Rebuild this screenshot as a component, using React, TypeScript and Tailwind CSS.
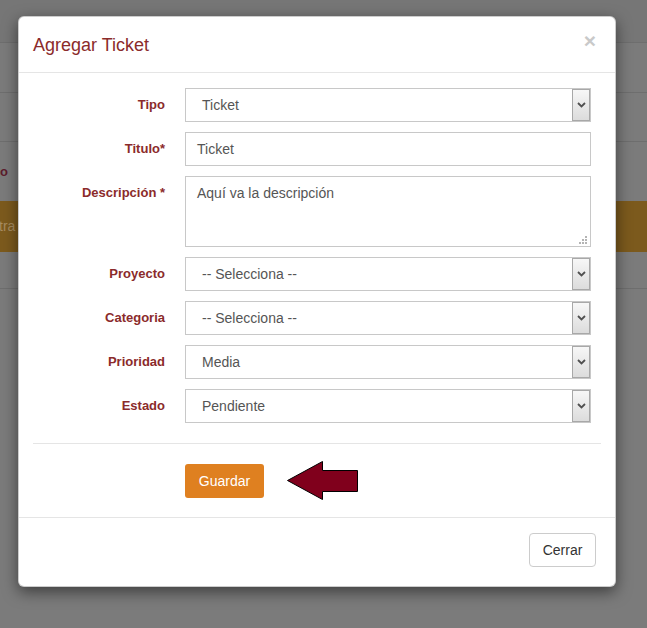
import React from "react";

const labelCls =
  "w-[132px] h-[34px] shrink-0 flex items-center justify-end text-[13px] font-bold text-[#8b2b2b]";

function Chevron() {
  return (
    <svg width="9" height="6" viewBox="0 0 9 6">
      <path d="M1 1 L4.5 4.5 L8 1" fill="none" stroke="#505050" strokeWidth="1.8" />
    </svg>
  );
}

function SelectBox({ value }: { value: string }) {
  return (
    <div className="w-[406px] h-[34px] border border-[#c8c8c8] bg-white flex items-stretch">
      <div className="flex-1 flex items-center pl-[16px] text-[14px] text-[#555]">{value}</div>
      <div className="w-[18px] border border-[#a8a8a8] bg-linear-to-b from-[#f7f7f7] to-[#dcdcdc] flex items-center justify-center">
        <Chevron />
      </div>
    </div>
  );
}

function Row({ label, children, top }: { label: string; children: React.ReactNode; top?: boolean }) {
  return (
    <div className={"flex gap-[20px] " + (top ? "items-start" : "items-center")}>
      <div className={labelCls}>{label}</div>
      {children}
    </div>
  );
}

export default function App() {
  return (
    <div className="relative w-[647px] h-[628px] overflow-hidden bg-[#7b7b7b] font-['Liberation_Sans',Arial,sans-serif]">
      {/* dimmed page behind the modal */}
      <div className="flex flex-col">
        <div className="h-[43px] border-b border-[#6e6e6e] bg-[#767676]" />
        <div className="h-[50px] border-b border-[#6e6e6e]" />
        <div className="h-[49px] border-b border-[#6e6e6e]" />
        <div className="h-[59px] flex items-center">
          <span className="text-[13px] font-bold leading-none text-[#5c1c2c]">o</span>
        </div>
        <div className="h-[51px] bg-[#7c5a1d] flex items-center">
          <span className="-ml-[1px] text-[14px] text-[#a78c60]">tra</span>
        </div>
        <div className="h-[37px] border-b border-[#6e6e6e]" />
      </div>

      {/* modal */}
      <div className="absolute left-[18px] top-[16px] w-[598px] rounded-[6px] bg-white border border-black/20 shadow-[0_5px_15px_rgba(0,0,0,0.5)]">
        <div className="h-[56px] border-b border-[#e5e5e5] flex items-center justify-between pl-[14px] pr-[19px]">
          <h4 className="text-[18px] text-[#8b2b2b] leading-none">Agregar Ticket</h4>
          <span className="-mt-[9px] text-[21px] font-bold leading-none text-[#c9c9c9]">×</span>
        </div>

        <div className="px-[14px] pt-[15px] pb-[19px]">
          <div className="flex flex-col gap-[10px]">
            <Row label="Tipo">
              <SelectBox value="Ticket" />
            </Row>
            <Row label="Titulo*">
              <div className="w-[406px] h-[34px] border border-[#c8c8c8] flex items-center pl-[11px] text-[14px] text-[#555]">
                Ticket
              </div>
            </Row>
            <Row label="Descripción *" top>
              <div className="relative w-[406px] h-[71px] border border-[#c8c8c8] pl-[11px] pt-[6px] text-[14px] leading-[20px] text-[#555]">
                Aquí va la descripción
                <svg className="absolute right-[3px] bottom-[2px]" width="9" height="9" viewBox="0 0 9 9">
                  <rect x="7" y="1" width="2" height="2" fill="#b4b4b4" />
                  <rect x="4" y="4" width="2" height="2" fill="#b4b4b4" />
                  <rect x="7" y="4" width="2" height="2" fill="#b4b4b4" />
                  <rect x="1" y="7" width="2" height="2" fill="#b4b4b4" />
                  <rect x="4" y="7" width="2" height="2" fill="#b4b4b4" />
                  <rect x="7" y="7" width="2" height="2" fill="#b4b4b4" />
                </svg>
              </div>
            </Row>
            <Row label="Proyecto">
              <SelectBox value="-- Selecciona --" />
            </Row>
            <Row label="Categoria">
              <SelectBox value="-- Selecciona --" />
            </Row>
            <Row label="Prioridad">
              <SelectBox value="Media" />
            </Row>
            <Row label="Estado">
              <SelectBox value="Pendiente" />
            </Row>
          </div>

          <div className="mt-[20px] border-t border-[#e5e5e5]" />

          <div className="mt-[20px] pl-[152px] flex items-center">
            <button className="w-[79px] h-[34px] rounded-[3px] bg-[#df8020] text-white text-[14px] flex items-center justify-center">
              Guardar
            </button>
            <svg className="ml-[23px] -my-[3px]" width="72" height="40" viewBox="0 0 72 40">
              <polygon
                points="0.5,19.5 35.5,0.5 35.5,9.5 70.5,9.5 70.5,30.5 35.5,30.5 35.5,38.5"
                fill="#80001c"
                stroke="#000"
                strokeWidth="1"
              />
            </svg>
          </div>
        </div>

        <div className="border-t border-[#e5e5e5] pt-[15px] pb-[19px] pr-[19px] flex justify-end">
          <button className="w-[67px] h-[34px] rounded-[4px] border border-[#cccccc] bg-white text-[14px] text-[#333]">
            Cerrar
          </button>
        </div>
      </div>
    </div>
  );
}
